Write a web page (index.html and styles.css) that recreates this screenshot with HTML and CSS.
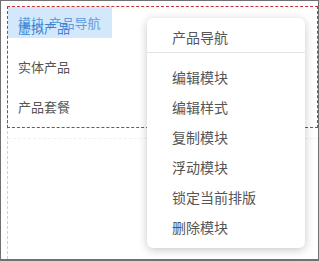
FILE: index.html
```html
<!DOCTYPE html>
<html lang="zh-CN">
<head>
    <meta charset="UTF-8">
    <meta name="viewport" content="width=device-width, initial-scale=1.0">
    <title>产品导航</title>
    <link rel="stylesheet" href="styles.css">
</head>
<body>
    <div class="frame">
        <div class="page">
            <div class="module">
                <span class="badge">模块-产品导航</span>
                <ul class="nav-list">
                    <li class="active">虚拟产品</li>
                    <li>实体产品</li>
                    <li>产品套餐</li>
                </ul>
            </div>
            <div class="module-next"></div>
        </div>

        <div class="menu">
            <div class="menu-title">产品导航</div>
            <ul class="menu-items">
                <li>编辑模块</li>
                <li>编辑样式</li>
                <li>复制模块</li>
                <li>浮动模块</li>
                <li>锁定当前排版</li>
                <li>删除模块</li>
            </ul>
        </div>
    </div>
</body>
</html>
```

FILE: styles.css
```css
* {
    box-sizing: border-box;
}
body {
    margin: 0;
    font-family: "Noto Sans CJK SC", "Noto Sans", sans-serif;
    background: #fff;
}
.frame {
    position: relative;
    width: 319px;
    height: 261px;
    border: 1px solid #707070;
    border-bottom-width: 2px;
    padding-top: 5px;
    overflow: hidden;
}
.page {
    margin-left: 6px;
    height: 100%;
    border-left: 1px dashed #d0d0d0;
}
.module {
    position: relative;
    margin-left: -1px;
    border: 1px dashed #c8333a;
}
.badge {
    position: absolute;
    top: 0;
    left: 0;
    width: 104px;
    height: 31px;
    line-height: 31px;
    padding-left: 10px;
    background: #d4e8fb;
    color: #5d9de0;
    font-size: 13px;
}
.nav-list {
    list-style: none;
    margin: 0;
    padding: 0;
}
.nav-list li {
    height: 40px;
    line-height: 40px;
    padding-left: 10px;
    font-size: 13px;
    color: #555;
}
.nav-list li.active {
    position: relative;
    top: 1px;
    color: #3f83d0;
}
.module-next {
    margin-top: 10px;
    border-top: 1px dashed #f0f0f0;
}
.menu {
    position: absolute;
    left: 146px;
    top: 17px;
    width: 158px;
    height: 230px;
    padding: 4px 0 6px;
    background: #fff;
    border-radius: 6px;
    box-shadow: 0 2px 10px rgba(0, 0, 0, 0.22);
    color: #555;
    font-size: 14px;
}
.menu-title {
    height: 31px;
    line-height: 30px;
    padding-left: 25px;
    border-bottom: 1px solid #e3e3e3;
}
.menu-items {
    list-style: none;
    margin: 9px 0 0;
    padding: 0;
}
.menu-items li {
    height: 30px;
    line-height: 30px;
    padding-left: 25px;
    cursor: pointer;
}
```
